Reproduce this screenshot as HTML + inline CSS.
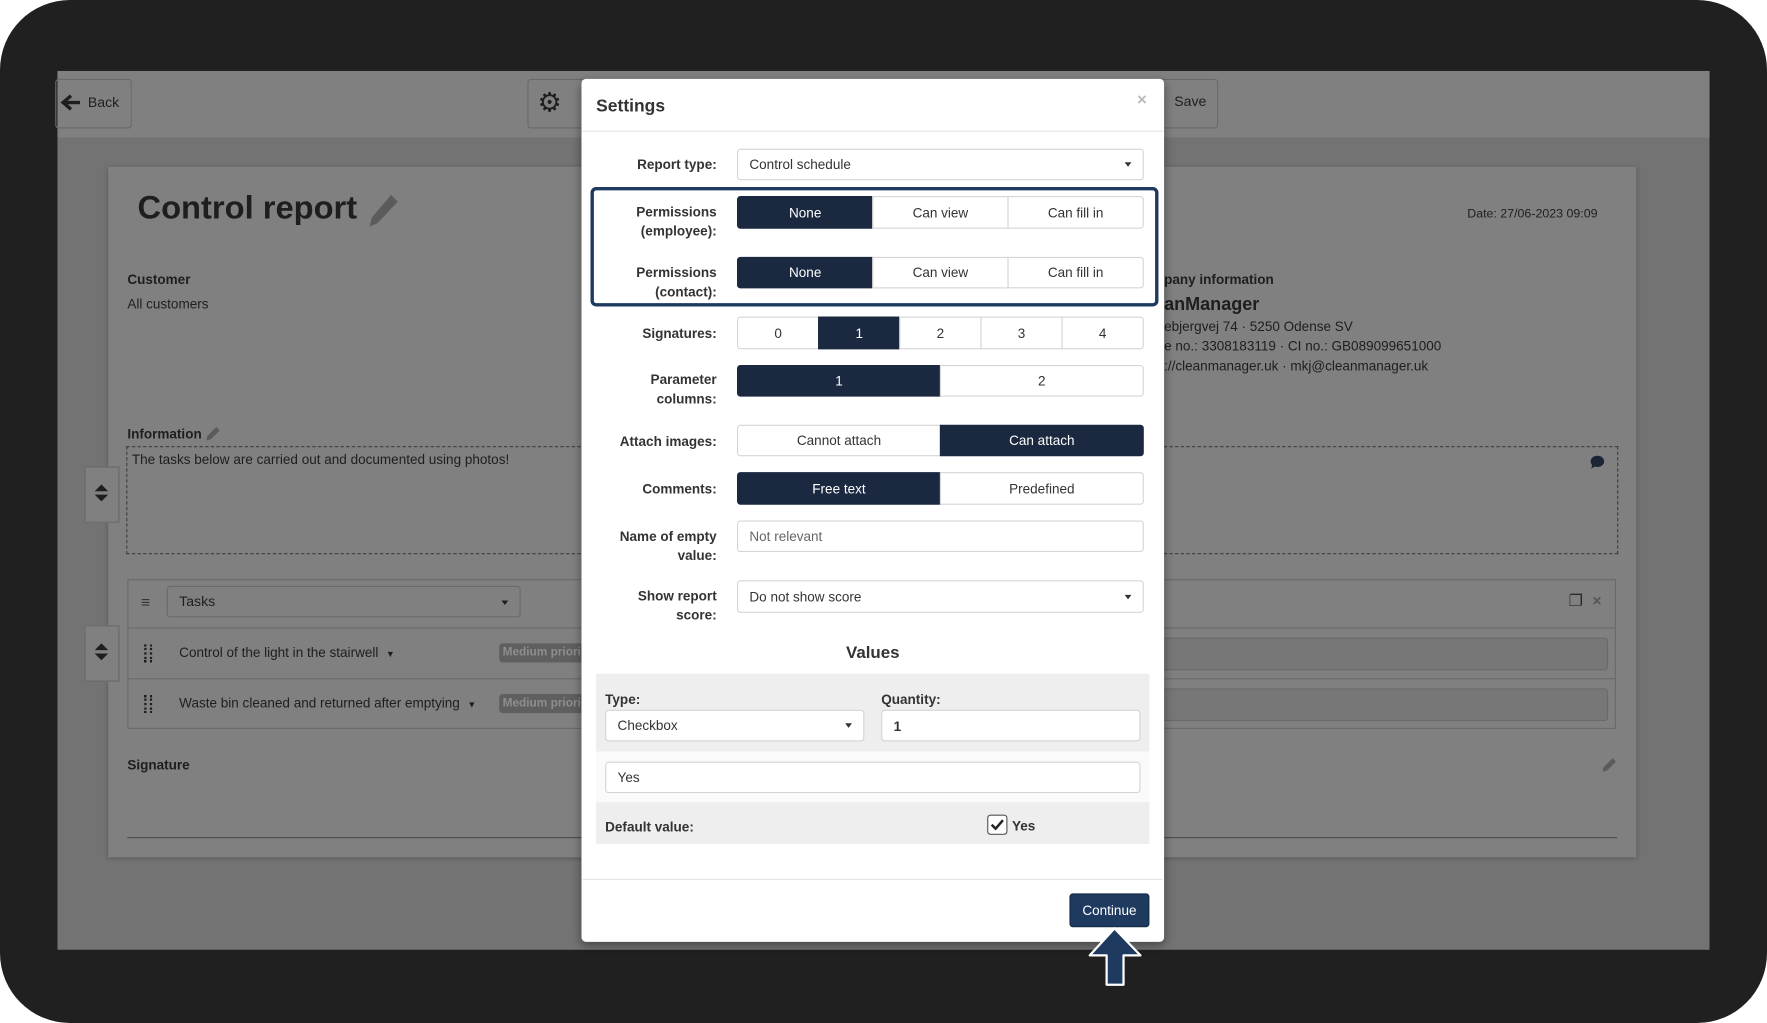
<!DOCTYPE html>
<html><head><meta charset="utf-8"><style>
html,body{margin:0;padding:0;background:#fff;overflow:hidden;width:1767px;height:1023px}
#s{position:absolute;left:0;top:0;width:1568px;height:908px;transform:scale(1.12691,1.12665);transform-origin:0 0;font-family:"Liberation Sans",sans-serif;color:#222}
.a{position:absolute}
.frame{left:0;top:0;width:1568px;height:908px;background:#202020;border-radius:62px}
.b{font-weight:bold}
.t{font-size:12px;white-space:nowrap}
.lbl{position:absolute;right:932px;text-align:right;font-weight:bold;font-size:12px;line-height:17px;color:#333;width:100px}
.ctl{position:absolute;left:654px;width:361px;box-sizing:border-box;border:1px solid #d5d5d5;border-radius:3px;background:#fff;font-size:12px;color:#333}
.grp{position:absolute;left:654px;width:361px;display:flex;box-sizing:border-box}
.grp div{flex:1;border:1px solid #d5d5d5;margin-left:-1px;background:#fff;display:flex;align-items:center;justify-content:center;font-size:12px;color:#333}
.grp div:first-child{margin-left:0;border-radius:3px 0 0 3px}
.grp div:last-child{border-radius:0 3px 3px 0}
.grp .on{background:#1a2840;color:#fff;border-color:#1a2840}
.caret{position:absolute;right:10px;top:50%;margin-top:-2px;border-left:3.5px solid transparent;border-right:3.5px solid transparent;border-top:4px solid #333}
</style></head><body><div id="s">
<div class="a frame"></div>
<div class="a" style="left:51px;top:63px;width:1466px;height:780px;background:#737373"></div>
<div class="a" style="left:51px;top:63px;width:1466px;height:59px;background:#808080"></div>
<div class="a" style="left:49px;top:70px;width:66px;height:42px;border:1px solid #6a6a6a;border-radius:3px"></div>
<svg class="a" style="left:53px;top:83px" width="20" height="16"><path d="M18 8 H4 M10 2 L3 8 L10 14" stroke="#1e1e1e" stroke-width="3" fill="none"/></svg>
<div class="a t" style="left:78px;top:84px;font-size:12.5px;color:#1e1e1e">Back</div>
<div class="a" style="left:468px;top:70px;width:60px;height:42px;border:1px solid #6a6a6a;border-radius:3px"></div>
<div class="a" style="left:477px;top:77px;font-size:24px;color:#1e1e1e">&#9881;</div>
<div class="a" style="left:1030px;top:70px;width:49px;height:42px;border:1px solid #6a6a6a;border-radius:3px"></div>
<div class="a t" style="left:1042px;top:83px;font-size:12.5px;color:#1e1e1e">Save</div>
<div class="a" style="left:96px;top:148px;width:1356px;height:613px;background:#808080;box-shadow:0 1px 4px rgba(0,0,0,.25)"></div>
<div class="a b" style="left:122px;top:169px;font-size:29px;color:#1e1e1e">Control report</div>
<svg class="a" style="left:325px;top:171px" width="30" height="32" viewBox="0 0 30 32"><path d="M22 2 L28 8 L10 27 L3 30 L5 22 Z" fill="#5b5b5b"/></svg>
<div class="a t" style="left:1302px;top:184px;font-size:11px;color:#1e1e1e">Date: 27/06-2023 09:09</div>
<div class="a t b" style="left:113px;top:241px;color:#1e1e1e">Customer</div>
<div class="a t" style="left:113px;top:263px;color:#1e1e1e">All customers</div>
<div class="a t b" style="left:1033px;top:241px;color:#1e1e1e">pany information</div>
<div class="a b" style="left:1033px;top:262px;font-size:16px;color:#1e1e1e">anManager</div>
<div class="a t" style="left:1033px;top:283px;color:#1e1e1e">ebjergvej 74 · 5250 Odense SV</div>
<div class="a t" style="left:1033px;top:300px;color:#1e1e1e">e no.: 3308183119 · CI no.: GB089099651000</div>
<div class="a t" style="left:1033px;top:318px;color:#1e1e1e">://cleanmanager.uk · mkj@cleanmanager.uk</div>
<div class="a t b" style="left:113px;top:378px;color:#1e1e1e">Information</div>
<svg class="a" style="left:182px;top:378px" width="14" height="14"><path d="M10 1 L13 4 L5 12 L1 13 L2 9 Z" fill="#5b5b5b"/></svg>
<div class="a" style="left:112px;top:396px;width:1322px;height:94px;border:1px dashed #3e3e3e"></div>
<div class="a t" style="left:117px;top:401px;color:#1e1e1e">The tasks below are carried out and documented using photos!</div>
<svg class="a" style="left:1411px;top:404px" width="13" height="13"><ellipse cx="6.5" cy="5.5" rx="6" ry="5" fill="#1a2535"/><path d="M2 8 L1 12 L6 9Z" fill="#1a2535"/></svg>
<div class="a" style="left:75px;top:414px;width:31px;height:50px;background:#808080;border:1px solid #6a6a6a;box-sizing:border-box"></div>
<div class="a" style="left:84px;top:430px;border-left:6px solid transparent;border-right:6px solid transparent;border-bottom:6px solid #1e1e1e"></div>
<div class="a" style="left:84px;top:439px;border-left:6px solid transparent;border-right:6px solid transparent;border-top:6px solid #1e1e1e"></div>
<div class="a" style="left:113px;top:514px;width:1321px;height:133px;border:1px solid #6a6a6a;box-sizing:border-box"></div>
<div class="a" style="left:114px;top:557px;width:1320px;height:1px;background:#6a6a6a"></div>
<div class="a" style="left:114px;top:602px;width:1320px;height:1px;background:#6a6a6a"></div>
<div class="a" style="left:125px;top:526px;font-size:14px;color:#333">&#8801;</div>
<div class="a" style="left:148px;top:520px;width:314px;height:28px;border:1px solid #6a6a6a;border-radius:3px;box-sizing:border-box"></div>
<div class="a t" style="left:159px;top:527px;font-size:12.5px;color:#1e1e1e">Tasks</div>
<div class="a" style="left:445px;top:533px;border-left:3.5px solid transparent;border-right:3.5px solid transparent;border-top:4px solid #1e1e1e"></div>
<div class="a t" style="left:1392px;top:525px;font-size:14px;color:#2a2a2a">&#10064;</div>
<div class="a t b" style="left:1413px;top:525px;font-size:14px;color:#555">&#215;</div>
<div class="a" style="left:128px;top:572px;height:16px;border-left:2px dotted #1e1e1e;border-right:2px dotted #1e1e1e;width:3px"></div>
<div class="a" style="left:128px;top:617px;height:16px;border-left:2px dotted #1e1e1e;border-right:2px dotted #1e1e1e;width:3px"></div>
<div class="a t" style="left:159px;top:572px;color:#1e1e1e">Control of the light in the stairwell &nbsp;<span style="font-size:8px">&#9660;</span></div>
<div class="a t" style="left:159px;top:617px;color:#1e1e1e">Waste bin cleaned and returned after emptying &nbsp;<span style="font-size:8px">&#9660;</span></div>
<div class="a t b" style="left:443px;top:571px;width:80px;height:17px;background:#5f5f5f;border-radius:3px;color:#8e8e8e;font-size:10.5px;line-height:17px;padding-left:3px">Medium priori</div>
<div class="a t b" style="left:443px;top:616px;width:80px;height:17px;background:#5f5f5f;border-radius:3px;color:#8e8e8e;font-size:10.5px;line-height:17px;padding-left:3px">Medium priori</div>
<div class="a" style="left:1030px;top:566px;width:397px;height:29px;background:#777;border:1px solid #6a6a6a;border-radius:3px;box-sizing:border-box"></div>
<div class="a" style="left:1030px;top:611px;width:397px;height:29px;background:#777;border:1px solid #6a6a6a;border-radius:3px;box-sizing:border-box"></div>
<div class="a" style="left:75px;top:555px;width:31px;height:50px;background:#808080;border:1px solid #6a6a6a;box-sizing:border-box"></div>
<div class="a" style="left:84px;top:571px;border-left:6px solid transparent;border-right:6px solid transparent;border-bottom:6px solid #1e1e1e"></div>
<div class="a" style="left:84px;top:580px;border-left:6px solid transparent;border-right:6px solid transparent;border-top:6px solid #1e1e1e"></div>
<div class="a t b" style="left:113px;top:672px;color:#1e1e1e">Signature</div>
<svg class="a" style="left:1421px;top:672px" width="14" height="14"><path d="M10 1 L13 4 L5 12 L1 13 L2 9 Z" fill="#5b5b5b"/></svg>
<div class="a" style="left:113px;top:743px;width:1322px;height:1px;background:#4a4a4a"></div>

<div class="a" style="left:516px;top:70px;width:517px;height:766px;background:#fff;border-radius:4px;box-shadow:0 3px 9px rgba(0,0,0,.4)"></div>
<div class="a b" style="left:529px;top:86px;font-size:15.5px;color:#333">Settings</div>
<div class="a b" style="left:1009px;top:80px;font-size:15px;color:#bbb">&#215;</div>
<div class="a" style="left:517px;top:116px;width:515px;height:1px;background:#e5e5e5"></div>

<div class="lbl" style="top:138px">Report type:</div>
<div class="ctl" style="top:132px;height:28px;padding:6px 10px">Control schedule<div class="caret"></div></div>

<div class="a" style="left:524px;top:166px;width:504px;height:106px;border:3px solid #1f3a5f;border-radius:5px;box-sizing:border-box"></div>
<div class="lbl" style="top:180px">Permissions (employee):</div>
<div class="grp" style="top:174px;height:29px"><div class="on">None</div><div>Can view</div><div>Can fill in</div></div>
<div class="lbl" style="top:234px">Permissions (contact):</div>
<div class="grp" style="top:228px;height:28px"><div class="on">None</div><div>Can view</div><div>Can fill in</div></div>

<div class="lbl" style="top:288px">Signatures:</div>
<div class="grp" style="top:281px;height:29px"><div>0</div><div class="on">1</div><div>2</div><div>3</div><div>4</div></div>

<div class="lbl" style="top:329px">Parameter columns:</div>
<div class="grp" style="top:324px;height:28px"><div class="on">1</div><div>2</div></div>

<div class="lbl" style="top:384px">Attach images:</div>
<div class="grp" style="top:377px;height:28px"><div>Cannot attach</div><div class="on">Can attach</div></div>

<div class="lbl" style="top:426px">Comments:</div>
<div class="grp" style="top:419px;height:29px"><div class="on">Free text</div><div>Predefined</div></div>

<div class="lbl" style="top:468px">Name of empty value:</div>
<div class="ctl" style="top:462px;height:28px;padding:6px 10px;color:#666">Not relevant</div>

<div class="lbl" style="top:521px">Show report score:</div>
<div class="ctl" style="top:515px;height:29px;padding:7px 10px">Do not show score<div class="caret"></div></div>

<div class="a b" style="left:516px;width:517px;text-align:center;top:571px;font-size:15px;color:#333">Values</div>
<div class="a" style="left:529px;top:598px;width:491px;height:151px;background:#eee"></div>
<div class="a" style="left:529px;top:667px;width:491px;height:45px;background:#fafafa"></div>
<div class="a t b" style="left:537px;top:614px;color:#333">Type:</div>
<div class="a t b" style="left:782px;top:614px;color:#333">Quantity:</div>
<div class="ctl" style="left:537px;width:230px;top:630px;height:28px;padding:6px 10px">Checkbox<div class="caret"></div></div>
<div class="ctl" style="left:782px;width:230px;top:630px;height:28px;padding:7px 10px;font-weight:bold">1</div>
<div class="ctl" style="left:537px;width:475px;top:676px;height:28px;padding:6px 10px">Yes</div>
<div class="a t b" style="left:537px;top:727px;color:#333">Default value:</div>
<div class="a" style="left:876px;top:723px;width:18px;height:18px;border:1px solid #555;border-radius:3px;box-sizing:border-box;background:#fff"></div>
<svg class="a" style="left:878px;top:725px" width="14" height="14"><path d="M2 7 L5.5 10.5 L12 3" stroke="#222" stroke-width="2.2" fill="none"/></svg>
<div class="a t b" style="left:898px;top:726px;color:#333">Yes</div>

<div class="a" style="left:517px;top:780px;width:515px;height:1px;background:#e5e5e5"></div>
<div class="a" style="left:949px;top:793px;width:71px;height:30px;background:#1f3a5f;border:1px solid #162a45;border-radius:3px;box-sizing:border-box;color:#fff;font-size:12px;text-align:center;line-height:28px">Continue</div>
<svg class="a" style="left:962px;top:822px" width="56" height="56" viewBox="0 0 56 56"><path d="M27 2 L50 26 L35 26 L35 52 L20 52 L20 26 L5 26 Z" fill="#1f3a5f" stroke="#fff" stroke-width="2" stroke-linejoin="round"/></svg>
</div></body></html>
